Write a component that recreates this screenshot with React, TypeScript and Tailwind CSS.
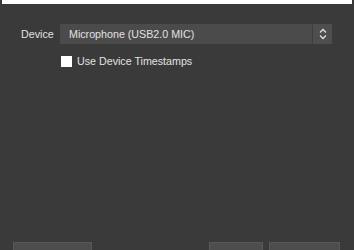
export default function App() {
  return (
    <div
      className="w-[354px] h-[250px] bg-[#3b3a3b] overflow-hidden flex flex-col text-[10.7px] text-[#e2e2e2]"
      style={{ fontFamily: '"Liberation Sans", Arial, sans-serif' }}
    >
      {/* top white strip */}
      <div className="h-[4px] mx-[2px] bg-white shrink-0" />

      {/* device row */}
      <div className="flex items-center mt-[20px] pl-[21px]">
        <span className="w-[39px]">Device</span>
        <div className="flex h-[20px] w-[272px] bg-[#4b4b4b]">
          <div className="flex-1 flex items-center pl-[9px]">Microphone (USB2.0 MIC)</div>
          <div className="w-[20px] border-l border-[#3e3e3e] bg-[#4e4e4e] flex items-center justify-center">
            <svg width="8" height="12" viewBox="0 0 8 12" fill="none" stroke="#e0e0e0" strokeWidth="1.3">
              <path d="M1 4.5 L4 1.5 L7 4.5" />
              <path d="M1 7.5 L4 10.5 L7 7.5" />
            </svg>
          </div>
        </div>
      </div>

      {/* checkbox row */}
      <div className="flex items-center mt-[9px] pl-[61px] gap-[5px]">
        <div className="w-[11px] h-[11px] bg-white" />
        <span>Use Device Timestamps</span>
      </div>

      {/* bottom buttons, cut off */}
      <div className="mt-auto flex px-[13px] translate-y-[14px] items-end">
        <div className="w-[79px] h-[22px] bg-[#4d4d4d] border border-[#575757]" />
        <div className="ml-auto w-[54px] h-[22px] bg-[#4d4d4d] border border-[#575757]" />
        <div className="ml-[6px] mr-[1px] w-[71px] h-[22px] bg-[#4d4d4d] border border-[#575757]" />
      </div>
    </div>
  )
}
